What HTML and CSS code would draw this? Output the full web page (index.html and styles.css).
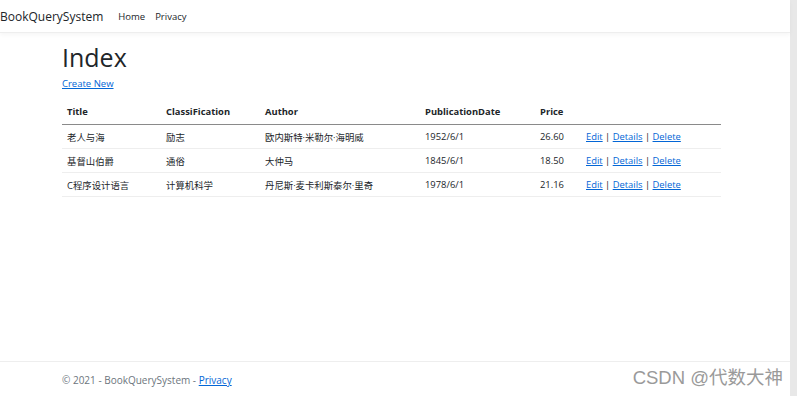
FILE: index.html
```html
<!DOCTYPE html>
<html lang="en">
<head>
    <meta charset="UTF-8">
    <meta name="viewport" content="width=device-width, initial-scale=1.0">
    <title>Index - BookQuerySystem</title>
    <link rel="stylesheet" href="styles.css">
</head>
<body>

<div class="window">
    <div class="page">
        <header class="navbar">
            <a class="brand" href="#">BookQuerySystem</a>
            <nav class="nav-links">
                <a href="#">Home</a>
                <a href="#">Privacy</a>
            </nav>
        </header>

        <main class="container">
            <h1 class="title">Index</h1>
            <p class="create"><a href="#">Create New</a></p>

            <table class="books">
                <thead>
                    <tr>
                        <th class="c-title">Title</th>
                        <th class="c-class">ClassiFication</th>
                        <th class="c-author">Author</th>
                        <th class="c-date">PublicationDate</th>
                        <th class="c-price">Price</th>
                        <th></th>
                    </tr>
                </thead>
                <tbody>
                    <tr>
                        <td>老人与海</td>
                        <td>励志</td>
                        <td>欧内斯特·米勒尔·海明威</td>
                        <td>1952/6/1</td>
                        <td>26.60</td>
                        <td><a href="#">Edit</a> | <a href="#">Details</a> | <a href="#">Delete</a></td>
                    </tr>
                    <tr>
                        <td>基督山伯爵</td>
                        <td>通俗</td>
                        <td>大仲马</td>
                        <td>1845/6/1</td>
                        <td>18.50</td>
                        <td><a href="#">Edit</a> | <a href="#">Details</a> | <a href="#">Delete</a></td>
                    </tr>
                    <tr>
                        <td>C程序设计语言</td>
                        <td>计算机科学</td>
                        <td>丹尼斯·麦卡利斯泰尔·里奇</td>
                        <td>1978/6/1</td>
                        <td>21.16</td>
                        <td><a href="#">Edit</a> | <a href="#">Details</a> | <a href="#">Delete</a></td>
                    </tr>
                </tbody>
            </table>
        </main>

        <footer class="footer">
            <div class="footer-inner">
                &copy; 2021 - BookQuerySystem - <a href="#">Privacy</a>
            </div>
        </footer>

        <div class="watermark">CSDN @代数大神</div>
    </div>
    <div class="scroll-track"></div>
</div>

</body>
</html>
```

FILE: styles.css
```css
body {
    margin: 0;
    font-family: "Open Sans", "Noto Sans CJK SC", sans-serif;
    color: #212529;
    background-color: #fff;
    overflow: hidden;
}

a {
    color: #0366d6;
}

.window {
    display: flex;
    height: 396px;
}

.page {
    position: relative;
    flex: 1;
    display: flex;
    flex-direction: column;
}

.scroll-track {
    width: 7px;
    background-color: #e8e8e8;
}

.navbar {
    display: flex;
    align-items: center;
    height: 32px;
    border-bottom: 1px solid #eeeeee;
    box-shadow: 0 2px 4px rgba(0, 0, 0, 0.04);
}

.brand {
    font-size: 12px;
    color: #212529;
    text-decoration: none;
    margin-right: 15px;
}

.nav-links {
    display: flex;
    gap: 10px;
}

.nav-links a {
    font-size: 9.5px;
    color: #212529;
    text-decoration: none;
}

.container {
    flex: 1;
    margin-left: 62px;
    width: 659px;
}

.title {
    font-size: 25px;
    font-weight: 400;
    margin: 8px 0 0;
    line-height: 32px;
}

.create {
    margin: 4px 0 12px;
    font-size: 9.5px;
}

.books {
    width: 100%;
    border-collapse: collapse;
    font-size: 9.4px;
}

.books th {
    text-align: left;
    font-weight: 700;
    padding: 0 5px 4px;
    height: 18px;
    border-bottom: 1px solid #8a8a8a;
}

.books td {
    padding: 0 5px;
    height: 23px;
    border-bottom: 1px solid #eeeeee;
}

.c-title { width: 89px; }
.c-class { width: 89px; }
.c-author { width: 150px; }
.c-date { width: 105px; }
.c-price { width: 36px; }

.footer {
    height: 34px;
    border-top: 1px solid #eeeeee;
    font-size: 10px;
    color: #6c757d;
}

.footer-inner {
    margin-left: 62px;
    padding-top: 11px;
}

.watermark {
    position: absolute;
    right: 7px;
    bottom: 7px;
    font-family: "Liberation Sans", "Noto Sans CJK SC", sans-serif;
    font-size: 18.5px;
    color: #9a9a9a;
}
```
